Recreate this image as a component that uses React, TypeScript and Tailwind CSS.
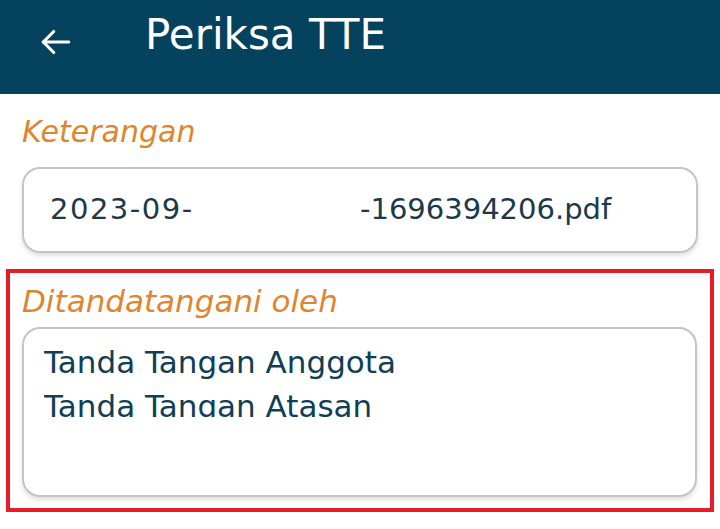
export default function App() {
  return (
    <div className="w-[720px] h-[529px] overflow-hidden bg-white font-['DejaVu_Sans',sans-serif]">
      {/* Top bar */}
      <header className="h-[94px] bg-[#04425e] flex items-start">
        <svg className="ml-[38px] mt-[24px]" width="36" height="36" viewBox="0 0 24 24" fill="none" stroke="white" strokeWidth="2.1" strokeLinecap="round" strokeLinejoin="round">
          <path d="M20.5 12H3.5" />
          <path d="M10.5 5l-7 7 7 7" />
        </svg>
        <h1 className="ml-[71px] mt-[11px] text-white text-[42px] leading-[48px]">Periksa TTE</h1>
      </header>

      <div className="px-[22px] pt-[20px]">
        <p className="italic text-[#e0852b] text-[30px] leading-[36px]">Keterangan</p>
        <div className="mt-[17px] h-[86px] rounded-[18px] border-2 border-[#c4c4c4] shadow-[0_3px_4px_rgba(0,0,0,0.12)] flex items-center pl-[26px] text-[29px] text-[#1b3a48]">
          <span className="inline-block w-[145px] tracking-[1.5px]">2023-09-</span>
          <span className="inline-block w-[165px]" />
          <span>-1696394206.pdf</span>
        </div>
      </div>

      <div className="mx-[6px] mt-[16px] h-[243px] border-4 border-[#e41e26] pl-[12px] pr-[13px] pt-[10px]">
        <p className="italic text-[#e0852b] text-[31px] leading-[36px]">Ditandatangani oleh</p>
        <div className="mt-[8px] h-[170px] rounded-[18px] border-2 border-[#c4c4c4] shadow-[0_3px_4px_rgba(0,0,0,0.12)] px-[20px] pt-[11px] text-[31px] text-[#0f3e56] leading-[44px]">
          <div className="h-[77px] overflow-hidden">
            <p>Tanda Tangan Anggota</p>
            <p>Tanda Tangan Atasan</p>
          </div>
        </div>
      </div>
    </div>
  );
}
